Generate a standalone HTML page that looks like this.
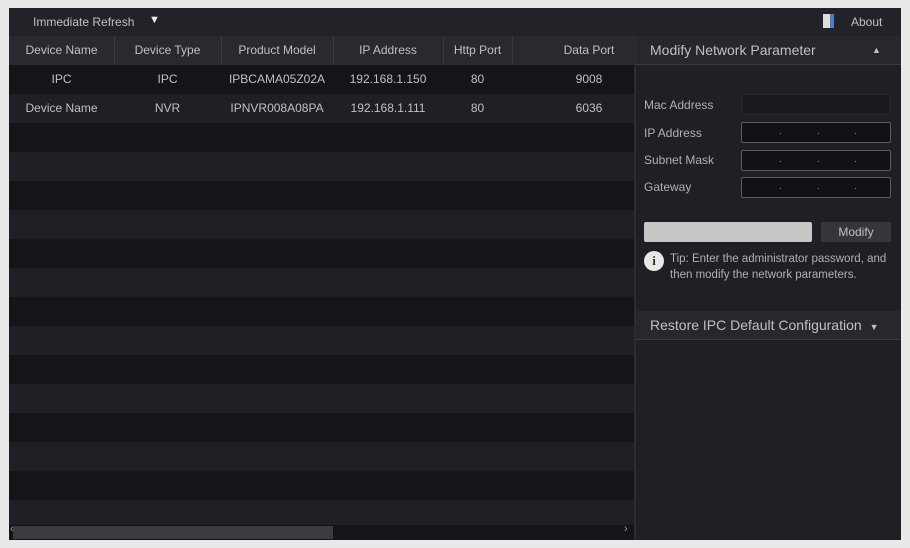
<!DOCTYPE html><html><head><style>
*{margin:0;padding:0;box-sizing:border-box}
body{width:910px;height:548px;background:#e9e9e9;font-family:"Liberation Sans",sans-serif;position:relative;overflow:hidden;color:#c0c0c0}
.a{position:absolute}
.win{left:9px;top:8px;width:892px;height:532px;background:#1f2025}
.tb{left:9px;top:8px;width:892px;height:28px;background:#222328;font-size:12px}
.hd{left:9px;top:36px;width:626px;height:29px;background:#292a30;font-size:12px}
.hd div,.row div{position:absolute;top:0;height:29px;line-height:29px;text-align:center}
.row{position:absolute;left:9px;width:626px;height:29px;font-size:12px}
.sep{position:absolute;top:0;width:1px;height:29px;background:#3a3b42}
.lbl{position:absolute;left:644px;font-size:12px;color:#b0b0b0}
.inp{position:absolute;left:741px;width:150px;height:21px;border:1px solid #5a5b60;background:#111216;border-radius:2px;font-size:10px;color:#888}
.inp span{position:absolute;top:3px}
</style></head><body>
<div class="a win"></div>
<div class="a tb"><span class="a" style="left:24px;top:7px">Immediate Refresh</span><span class="a" style="left:140px;top:6px;font-size:11px;color:#eee">▼</span>
<div class="a" style="left:814px;top:6px;width:11px;height:14px;background:#ddd;border-right:4px solid #4a7fc0"></div><span class="a" style="left:842px;top:7px">About</span></div>
<div class="a hd">
<div style="left:0;width:105px">Device Name</div><div class="sep" style="left:105px"></div>
<div style="left:105px;width:107px">Device Type</div><div class="sep" style="left:212px"></div>
<div style="left:212px;width:112px">Product Model</div><div class="sep" style="left:324px"></div>
<div style="left:324px;width:110px">IP Address</div><div class="sep" style="left:434px"></div>
<div style="left:434px;width:69px">Http Port</div><div class="sep" style="left:503px"></div>
<div style="left:535px;width:90px">Data Port</div>
</div>
<div id="rows"></div>
<script>
var h='';for(var i=0;i<16;i++){var y=65+i*29;if(y+29>525)break;h+='<div class="row" style="top:'+y+'px;background:'+(i%2?'#1f2025':'#141519')+'"></div>';}
document.getElementById('rows').innerHTML=h;
</script>
<div class="row" style="top:65px;background:#141519"><div style="left:0;width:105px">IPC</div><div style="left:105px;width:107px">IPC</div><div style="left:212px;width:112px">IPBCAMA05Z02A</div><div style="left:324px;width:110px">192.168.1.150</div><div style="left:434px;width:69px">80</div><div style="left:535px;width:90px">9008</div></div>
<div class="row" style="top:94px;background:#1f2025"><div style="left:0;width:105px">Device Name</div><div style="left:105px;width:107px">NVR</div><div style="left:212px;width:112px">IPNVR008A08PA</div><div style="left:324px;width:110px">192.168.1.111</div><div style="left:434px;width:69px">80</div><div style="left:535px;width:90px">6036</div></div>
<div class="a" style="left:9px;top:525px;width:626px;height:15px;background:#141519"></div>
<div class="a" style="left:13px;top:526px;width:320px;height:13px;background:#3a3c41"></div>
<div class="a" style="left:10px;top:523px;font-size:11px;color:#999">‹</div>
<div class="a" style="left:624px;top:523px;font-size:11px;color:#999">›</div>
<div class="a" style="left:634px;top:36px;width:2px;height:504px;background:#2c2d33"></div>
<div class="a" style="left:636px;top:36px;width:265px;height:29px;background:#27282d;border-bottom:1px solid #3a3b40;font-size:14px;line-height:29px;padding-left:14px">Modify Network Parameter<span class="a" style="left:236px;top:0;font-size:9px">▲</span></div>
<div class="lbl" style="top:98px">Mac Address</div>
<div class="inp" style="top:94px;border-color:#2a2b30;background:#1a1b1f"></div>
<div class="lbl" style="top:126px">IP Address</div>
<div class="inp" style="top:122px"><span style="left:37px">.</span><span style="left:75px">.</span><span style="left:112px">.</span></div>
<div class="lbl" style="top:153px">Subnet Mask</div>
<div class="inp" style="top:150px"><span style="left:37px">.</span><span style="left:75px">.</span><span style="left:112px">.</span></div>
<div class="lbl" style="top:180px">Gateway</div>
<div class="inp" style="top:177px"><span style="left:37px">.</span><span style="left:75px">.</span><span style="left:112px">.</span></div>
<div class="a" style="left:644px;top:222px;width:168px;height:20px;background:#c6c6c6;border-radius:2px"></div>
<div class="a" style="left:821px;top:222px;width:70px;height:20px;background:#34363b;font-size:12px;text-align:center;line-height:20px">Modify</div>
<div class="a" style="left:644px;top:251px;width:20px;height:20px;border-radius:50%;background:#e8e8e8;color:#333;font-size:13px;font-weight:bold;text-align:center;line-height:20px;font-family:'Liberation Serif',serif">i</div>
<div class="a" style="left:670px;top:251px;font-size:11.5px;line-height:16px;color:#b0b0b0">Tip: Enter the administrator password, and<br>then modify the network parameters.</div>
<div class="a" style="left:636px;top:311px;width:265px;height:29px;background:#27282d;border-bottom:1px solid #3a3b40;font-size:14px;line-height:29px;padding-left:14px">Restore IPC Default Configuration<span style="font-size:9px;margin-left:8px">▼</span></div>
</body></html>
